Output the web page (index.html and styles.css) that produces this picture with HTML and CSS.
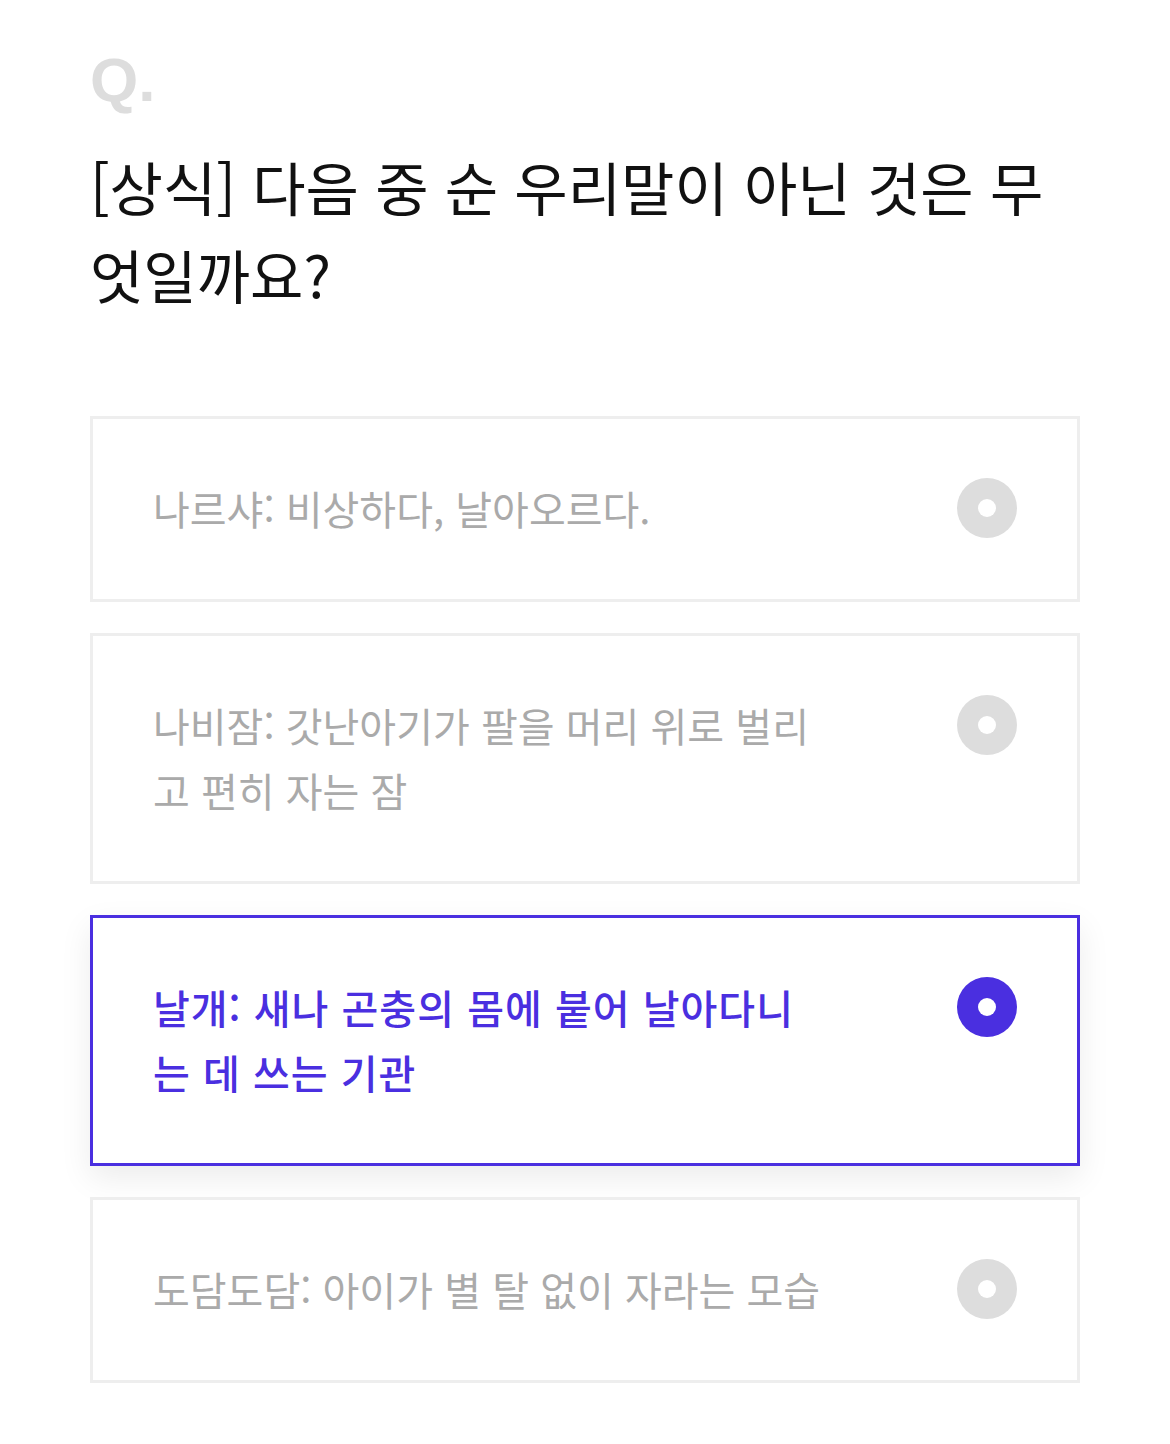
FILE: index.html
```html
<!DOCTYPE html>
<html lang="ko">
<head>
    <meta charset="UTF-8">
    <meta name="viewport" content="width=device-width, initial-scale=1.0">
    <title>퀴즈</title>
    <link rel="stylesheet" href="styles.css">
</head>
<body>
    <div class="quiz">
        <div class="q-mark">Q.</div>
        <h1 class="question">[상식] 다음 중 순 우리말이 아닌 것은 무엇일까요?</h1>

        <ul class="options">
            <li class="option">
                <span class="option-text">나르샤: 비상하다, 날아오르다.</span>
                <span class="radio"></span>
            </li>
            <li class="option">
                <span class="option-text">나비잠: 갓난아기가 팔을 머리 위로 벌리고 편히 자는 잠</span>
                <span class="radio"></span>
            </li>
            <li class="option selected">
                <span class="option-text">날개: 새나 곤충의 몸에 붙어 날아다니는 데 쓰는 기관</span>
                <span class="radio"></span>
            </li>
            <li class="option">
                <span class="option-text">도담도담: 아이가 별 탈 없이 자라는 모습</span>
                <span class="radio"></span>
            </li>
        </ul>
    </div>
</body>
</html>
```

FILE: styles.css
```css
body {
    margin: 0;
    background-color: #fff;
    font-family: "Noto Sans CJK KR", "Noto Sans", sans-serif;
    color: #111;
}

.quiz {
    padding: 40px 90px 60px;
}

.q-mark {
    font-family: "Liberation Sans", Arial, sans-serif;
    font-weight: bold;
    font-size: 62px;
    line-height: 80px;
    color: #ddd;
}

.question {
    margin: 22px 0 0;
    font-size: 58px;
    font-weight: normal;
    line-height: 88px;
}

.options {
    list-style: none;
    margin: 98px 0 0;
    padding: 0;
}

.option {
    display: flex;
    align-items: flex-start;
    justify-content: space-between;
    margin-bottom: 31px;
    padding: 57px 60px 58px;
    border: 3px solid #eee;
    background-color: #fff;
}

.option-text {
    width: 672px;
    font-size: 40px;
    line-height: 65px;
    color: #aaa;
}

.radio {
    flex: none;
    width: 60px;
    height: 60px;
    margin-top: 2px;
    border-radius: 50%;
    background-color: #ddd;
    position: relative;
}

.radio::after {
    content: "";
    position: absolute;
    top: 21px;
    left: 21px;
    width: 18px;
    height: 18px;
    border-radius: 50%;
    background-color: #fff;
}

.option.selected {
    border-color: #4a2fe0;
    box-shadow: 0 12px 30px rgba(0, 0, 0, 0.08);
}

.option.selected .option-text {
    color: #4a2fe0;
    font-weight: 500;
    letter-spacing: 1px;
}

.option.selected .radio {
    background-color: #4a2fe0;
}
```
